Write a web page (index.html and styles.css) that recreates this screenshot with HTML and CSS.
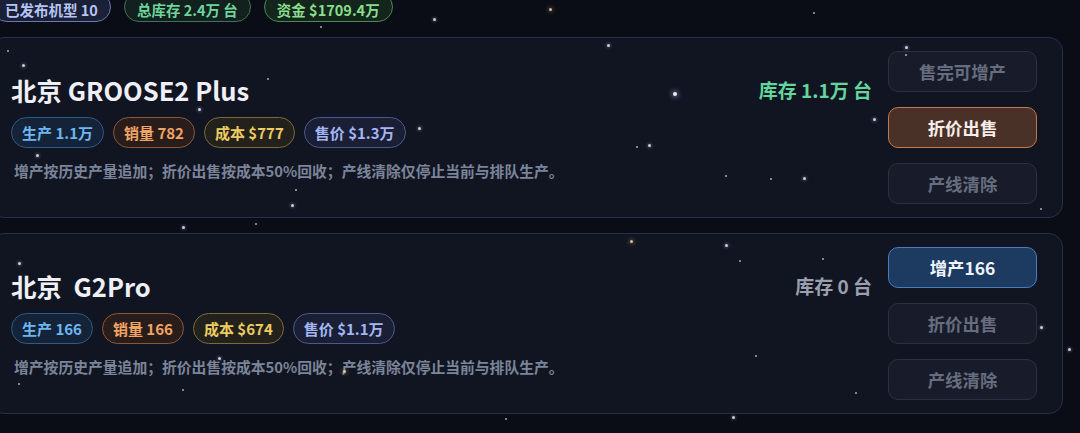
FILE: index.html
```html
<!DOCTYPE html>
<html lang="zh">
<head>
<meta charset="utf-8">
<link rel="stylesheet" href="styles.css">
</head>
<body>
<div class="page">
  <div class="summary">
    <span class="pill pill-models">已发布机型 10</span>
    <span class="pill pill-stock">总库存 2.4万 台</span>
    <span class="pill pill-funds">资金 $1709.4万</span>
  </div>

  <div class="list">
    <div class="card">
      <div class="main">
        <div class="head">
          <div class="title">北京 GROOSE2 Plus</div>
          <div class="stock stock-has">库存 1.1万 台</div>
        </div>
        <div class="chips">
          <span class="chip chip-prod">生产 1.1万</span>
          <span class="chip chip-sales">销量 782</span>
          <span class="chip chip-cost">成本 $777</span>
          <span class="chip chip-price">售价 $1.3万</span>
        </div>
        <div class="desc">增产按历史产量追加；折价出售按成本50%回收；产线清除仅停止当前与排队生产。</div>
      </div>
      <div class="actions">
        <button class="btn btn-off">售完可增产</button>
        <button class="btn btn-sell">折价出售</button>
        <button class="btn btn-off">产线清除</button>
      </div>
    </div>

    <div class="card">
      <div class="main">
        <div class="head">
          <div class="title">北京&nbsp; G2Pro</div>
          <div class="stock stock-none">库存 0 台</div>
        </div>
        <div class="chips">
          <span class="chip chip-prod">生产 166</span>
          <span class="chip chip-sales">销量 166</span>
          <span class="chip chip-cost">成本 $674</span>
          <span class="chip chip-price">售价 $1.1万</span>
        </div>
        <div class="desc">增产按历史产量追加；折价出售按成本50%回收；产线清除仅停止当前与排队生产。</div>
      </div>
      <div class="actions">
        <button class="btn btn-add">增产166</button>
        <button class="btn btn-off">折价出售</button>
        <button class="btn btn-off">产线清除</button>
      </div>
    </div>
  </div>

  <div class="stars">
    <i class="star s-md" style="left:433px;top:18px"></i>
    <i class="star s-sm" style="left:320px;top:26px"></i>
    <i class="star s-md warm" style="left:549px;top:8px"></i>
    <i class="star s-sm" style="left:813px;top:12px"></i>
    <i class="star s-md" style="left:607px;top:44px"></i>
    <i class="star s-md" style="left:905px;top:46px"></i>
    <i class="star s-sm" style="left:905px;top:54px"></i>
    <i class="star s-sm" style="left:7px;top:50px"></i>
    <i class="star s-md" style="left:22px;top:64px"></i>
    <i class="star s-sm" style="left:267px;top:78px"></i>
    <i class="star s-lg" style="left:673px;top:92px"></i>
    <i class="star s-md" style="left:198px;top:108px"></i>
    <i class="star s-md" style="left:873px;top:118px"></i>
    <i class="star s-md" style="left:418px;top:127px"></i>
    <i class="star s-sm" style="left:636px;top:146px"></i>
    <i class="star s-md" style="left:648px;top:144px"></i>
    <i class="star s-md" style="left:36px;top:154px"></i>
    <i class="star s-sm" style="left:295px;top:189px"></i>
    <i class="star s-md" style="left:291px;top:204px"></i>
    <i class="star s-sm" style="left:725px;top:175px"></i>
    <i class="star s-sm" style="left:770px;top:178px"></i>
    <i class="star s-md" style="left:803px;top:177px"></i>
    <i class="star s-sm" style="left:1040px;top:208px"></i>
    <i class="star s-sm" style="left:255px;top:223px"></i>
    <i class="star s-md" style="left:182px;top:226px"></i>
    <i class="star s-md warm" style="left:630px;top:240px"></i>
    <i class="star s-md" style="left:725px;top:244px"></i>
    <i class="star s-sm" style="left:739px;top:260px"></i>
    <i class="star s-sm" style="left:822px;top:258px"></i>
    <i class="star s-md" style="left:18px;top:262px"></i>
    <i class="star s-md" style="left:1040px;top:326px"></i>
    <i class="star s-md" style="left:1068px;top:348px"></i>
    <i class="star s-sm" style="left:755px;top:355px"></i>
    <i class="star s-md" style="left:218px;top:357px"></i>
    <i class="star s-md warm" style="left:343px;top:370px"></i>
    <i class="star s-sm" style="left:18px;top:383px"></i>
    <i class="star s-sm" style="left:182px;top:389px"></i>
    <i class="star s-sm" style="left:855px;top:392px"></i>
    <i class="star s-md" style="left:732px;top:416px"></i>
    <i class="star s-sm" style="left:505px;top:418px"></i>
  </div>
</div>
</body>
</html>
```

FILE: styles.css
```css
* { box-sizing: border-box; }

html, body {
  margin: 0;
  padding: 0;
  height: 100%;
}

body {
  background: #0a0c16;
  font-family: "Noto Sans CJK SC", "Noto Sans", "Liberation Sans", sans-serif;
  color: #eef0f6;
  overflow: hidden;
}

.page {
  position: relative;
  width: 1080px;
  height: 433px;
  overflow: hidden;
}

.summary {
  display: flex;
  align-items: flex-start;
  gap: 13px;
  margin: -8px 0 0 -8px;
}

.pill {
  display: block;
  height: 30px;
  padding: 9px 12px 0;
  border-radius: 15px;
  border: 1px solid;
  font-size: 14.5px;
  font-weight: 700;
  line-height: 16px;
  white-space: nowrap;
}

.pill-models {
  background: #1a2036;
  border-color: #6878b8;
  color: #b6c4f4;
}
.pill-stock {
  background: #12211d;
  border-color: #3a7656;
  color: #6fd39c;
}
.pill-funds {
  background: #14251b;
  border-color: #4a8a55;
  color: #88de8c;
}

.list {
  display: flex;
  flex-direction: column;
  gap: 15px;
  margin: 15px 17px 0 -10px;
}

.card {
  display: flex;
  align-items: center;
  gap: 16px;
  padding: 13px 25px 13px 20px;
  background: #111522;
  border: 1px solid #27304a;
  border-radius: 14px;
}

.main {
  flex: 1;
  min-width: 0;
}

.head {
  display: flex;
  align-items: center;
  justify-content: space-between;
}

.title {
  font-size: 25.5px;
  font-weight: 700;
  line-height: 30px;
  color: #eef0f6;
  white-space: nowrap;
}

.stock {
  font-size: 19px;
  font-weight: 700;
  line-height: 30px;
  white-space: nowrap;
}
.stock-has { color: #62d69c; }
.stock-none { color: #9aa0ae; }

.chips {
  display: flex;
  gap: 9px;
  margin-top: 12px;
}

.chip {
  display: inline-flex;
  align-items: center;
  height: 31px;
  padding: 0 10px;
  border-radius: 16px;
  border: 1px solid;
  font-size: 15px;
  font-weight: 700;
  white-space: nowrap;
}
.chip-prod {
  background: #142338;
  border-color: #2d5a86;
  color: #6db6f2;
}
.chip-sales {
  background: #291d1b;
  border-color: #8a5838;
  color: #f2a464;
}
.chip-cost {
  background: #23211b;
  border-color: #7a6a3c;
  color: #ebcb62;
}
.chip-price {
  background: #1a1f36;
  border-color: #4a5a8c;
  color: #a3b6f2;
}

.desc {
  margin-top: 12px;
  padding-left: 3px;
  font-size: 14.8px;
  font-weight: 700;
  line-height: 21px;
  color: #7b8499;
  white-space: nowrap;
}

.actions {
  display: flex;
  flex-direction: column;
  gap: 15px;
  flex: none;
}

.btn {
  width: 149px;
  height: 41px;
  border-radius: 10px;
  border: 1px solid;
  font-family: inherit;
  font-size: 17.4px;
  font-weight: 700;
  cursor: pointer;
}
.btn-off {
  background: #181c2a;
  border-color: #2b3144;
  color: #676d7e;
}
.btn-sell {
  background: #4a3128;
  border-color: #c07a4c;
  color: #f6eee8;
}
.btn-add {
  background: #1d3a60;
  border-color: #4a7cba;
  color: #f0f4ff;
}

.stars {
  position: absolute;
  inset: 0;
  pointer-events: none;
}

.star {
  position: absolute;
  border-radius: 50%;
  background: #e8ecf8;
}
.s-sm {
  width: 2px;
  height: 2px;
  opacity: 0.7;
}
.s-md {
  width: 3px;
  height: 3px;
  box-shadow: 0 0 3px 1px rgba(170, 180, 230, 0.35);
  opacity: 0.85;
}
.s-lg {
  width: 4px;
  height: 4px;
  box-shadow: 0 0 4px 2px rgba(170, 180, 230, 0.35);
}
.star.warm {
  background: #f2dca0;
  box-shadow: 0 0 4px 1px rgba(240, 200, 120, 0.4);
}
```
